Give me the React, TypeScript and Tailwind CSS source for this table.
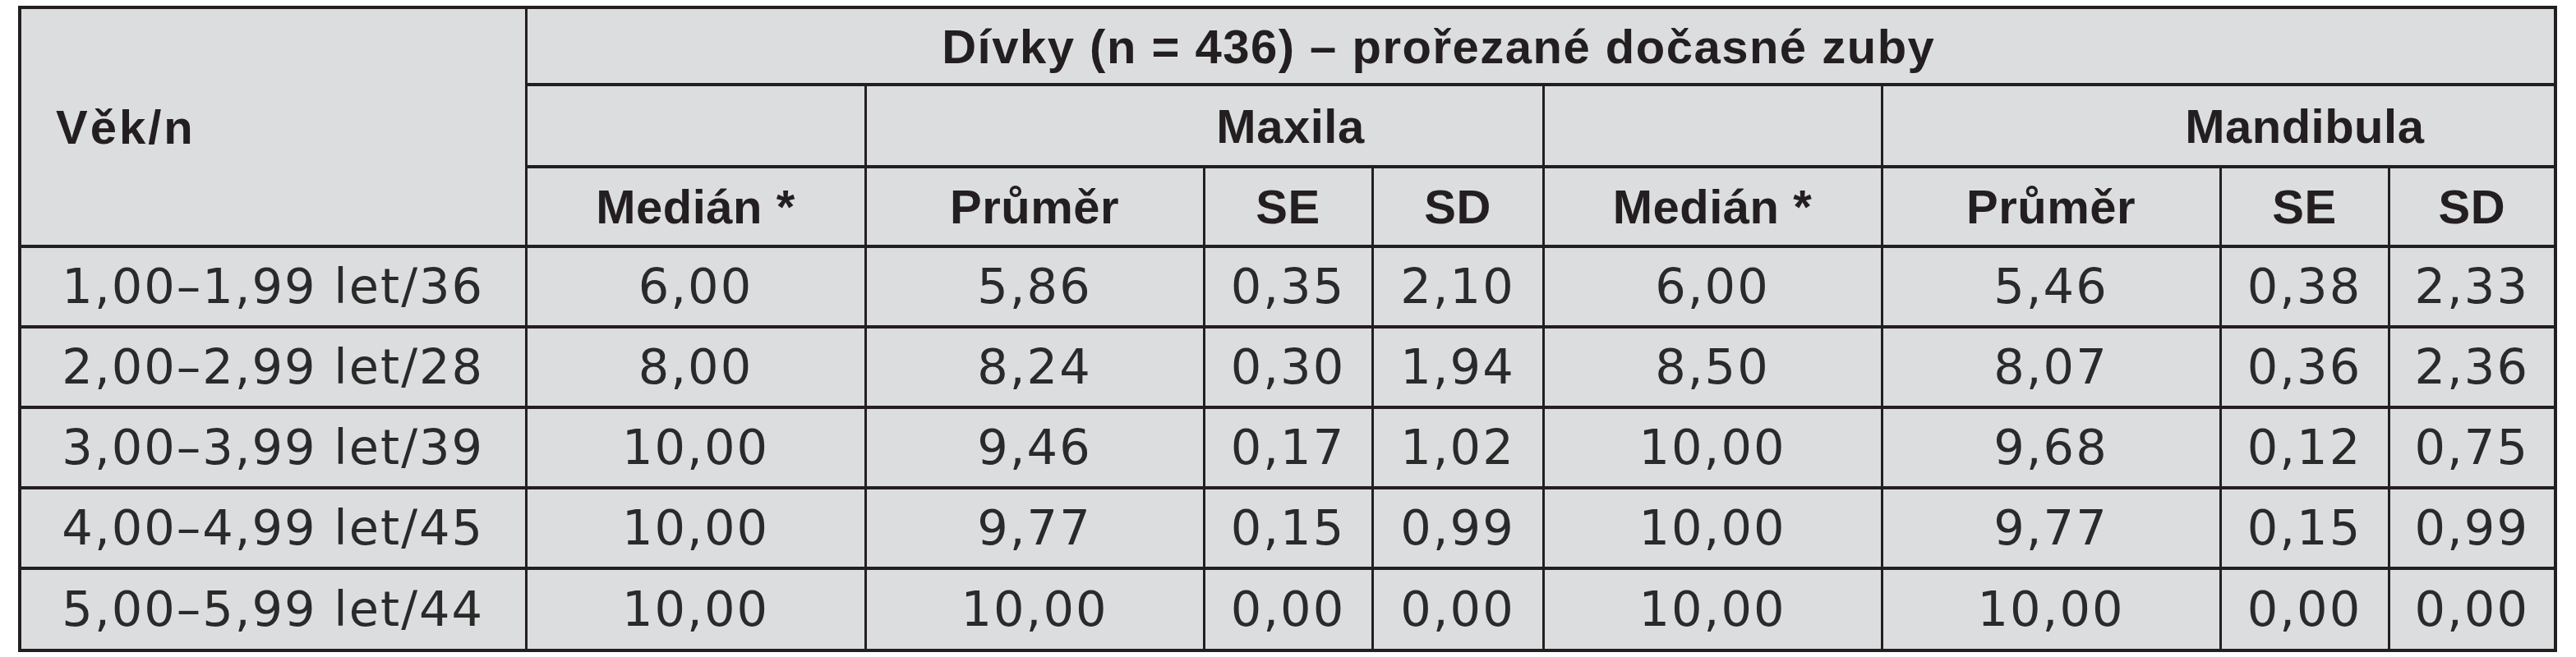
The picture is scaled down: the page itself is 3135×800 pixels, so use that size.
const HEAD_FONT = "font-['Liberation_Sans',Arial,sans-serif]";

const ROWS = [
  ['1,00–1,99 let/36', '6,00', '5,86', '0,35', '2,10', '6,00', '5,46', '0,38', '2,33'],
  ['2,00–2,99 let/28', '8,00', '8,24', '0,30', '1,94', '8,50', '8,07', '0,36', '2,36'],
  ['3,00–3,99 let/39', '10,00', '9,46', '0,17', '1,02', '10,00', '9,68', '0,12', '0,75'],
  ['4,00–4,99 let/45', '10,00', '9,77', '0,15', '0,99', '10,00', '9,77', '0,15', '0,99'],
  ['5,00–5,99 let/44', '10,00', '10,00', '0,00', '0,00', '10,00', '10,00', '0,00', '0,00'],
];

const WIDTHS = [616, 413, 412, 205, 208, 412, 412, 205, 203];

const cell = 'border-x-[3px] border-y-4 border-[#231f20] p-0';

export default function App() {
  return (
    <div className="min-h-screen bg-white pl-[22px] pt-[7px]">
      <table className="table-fixed border-collapse border-4 border-[#231f20] bg-[#dcdddf] text-[#231f20]" style={{ width: 3090 }}>
        <colgroup>
          {WIDTHS.map((w, i) => (
            <col key={i} style={{ width: w }} />
          ))}
        </colgroup>
        <thead className={`${HEAD_FONT} font-bold text-[58px] tracking-[0.5px]`}>
          <tr className="h-[94px]">
            <th rowSpan={3} className={`${cell} text-left align-middle pl-[42px] font-bold tracking-[3px]`}>
              Věk/n
            </th>
            <th colSpan={8} className={`${cell} text-center pr-[248px] tracking-[1.5px]`}>
              Dívky (n = 436) – prořezané dočasné zuby
            </th>
          </tr>
          <tr className="h-[100px]">
            <th className={cell} />
            <th colSpan={3} className={`${cell} text-center pl-[210px]`}>
              Maxila
            </th>
            <th className={cell} />
            <th colSpan={3} className={`${cell} text-center pl-[210px]`}>
              Mandibula
            </th>
          </tr>
          <tr className="h-[97px]">
            <th className={`${cell} text-center`}>Medián *</th>
            <th className={`${cell} text-center`}>Průměr</th>
            <th className={`${cell} text-center`}>SE</th>
            <th className={`${cell} text-center`}>SD</th>
            <th className={`${cell} text-center`}>Medián *</th>
            <th className={`${cell} text-center`}>Průměr</th>
            <th className={`${cell} text-center`}>SE</th>
            <th className={`${cell} text-center`}>SD</th>
          </tr>
        </thead>
        <tbody className="font-['DejaVu_Sans',sans-serif] font-normal text-[59px] tracking-[2px] text-[#2a2a2a]">
          {ROWS.map((row, r) => (
            <tr key={r} className={r === ROWS.length - 1 ? 'h-[100px]' : 'h-[98px]'}>
              {row.map((v, c) => (
                <td key={c} className={`${cell} text-center whitespace-nowrap`}>
                  {v}
                </td>
              ))}
            </tr>
          ))}
        </tbody>
      </table>
    </div>
  );
}
